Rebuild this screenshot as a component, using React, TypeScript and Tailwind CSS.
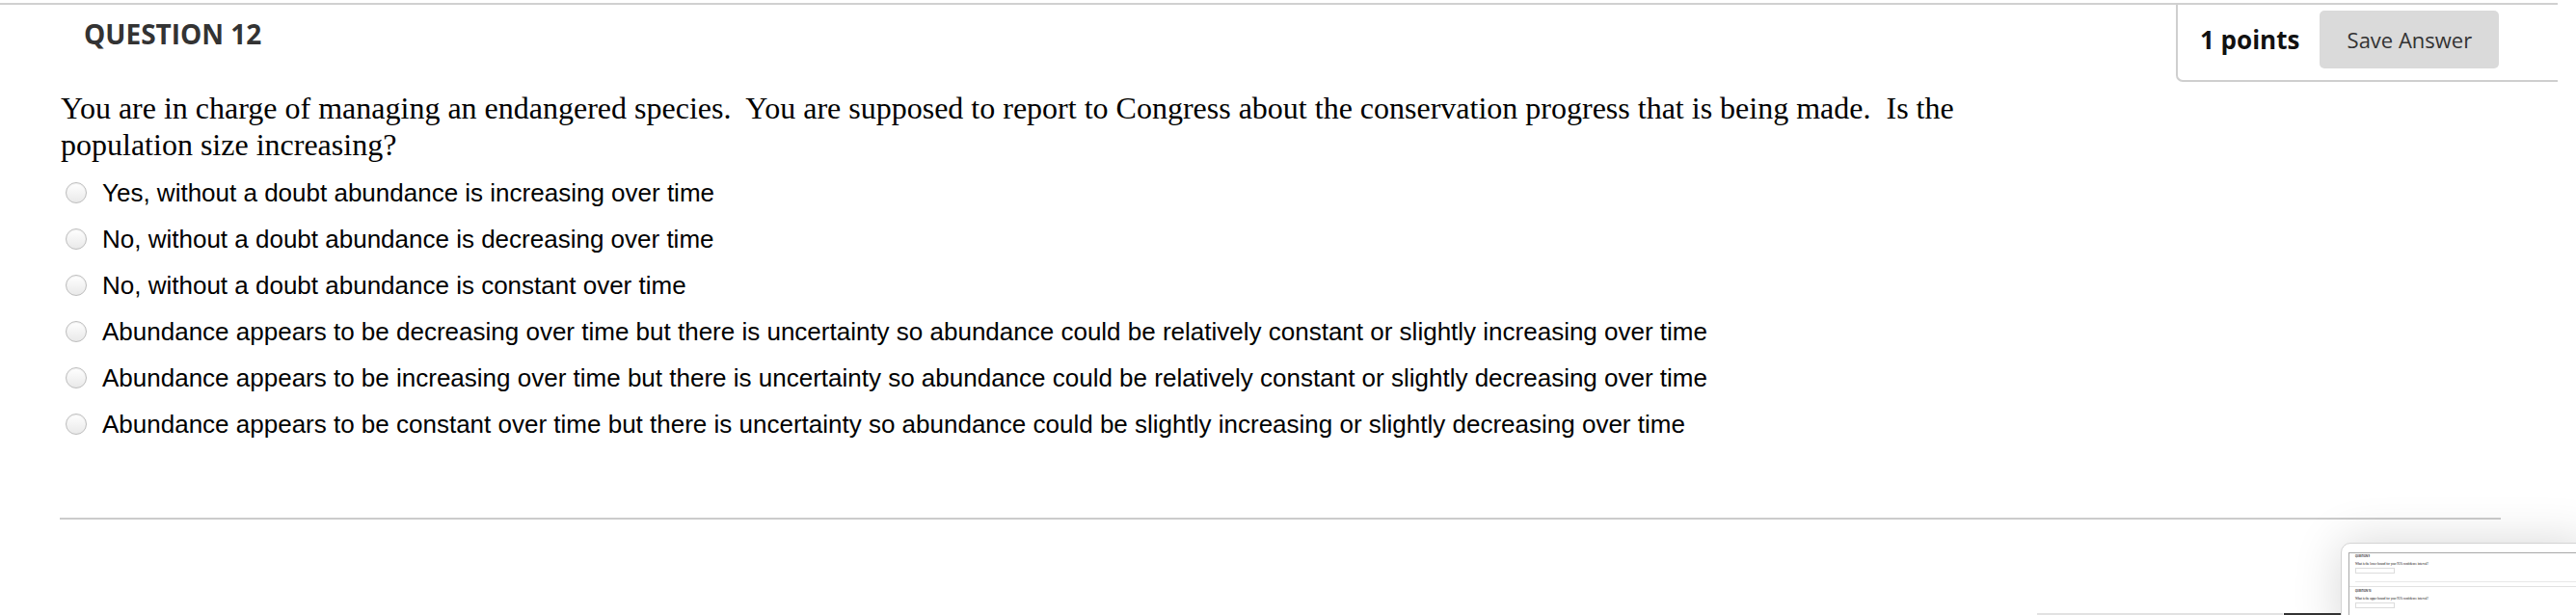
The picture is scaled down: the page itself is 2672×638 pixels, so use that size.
const options = [
  "Yes, without a doubt abundance is increasing over time",
  "No, without a doubt abundance is decreasing over time",
  "No, without a doubt abundance is constant over time",
  "Abundance appears to be decreasing over time but there is uncertainty so abundance could be relatively constant or slightly increasing over time",
  "Abundance appears to be increasing over time but there is uncertainty so abundance could be relatively constant or slightly decreasing over time",
  "Abundance appears to be constant over time but there is uncertainty so abundance could be slightly increasing or slightly decreasing over time",
];

function Radio() {
  return (
    <span className="h-[22px] w-[22px] shrink-0 rounded-full border border-[#bdbdbd] bg-linear-to-b from-white to-[#e9e9e9] shadow-[inset_0_1px_1px_rgba(0,0,0,0.06)]" />
  );
}

function ThumbQuestion({ label, text, first }: { label: string; text: string; first?: boolean }) {
  return (
    <div className={first ? "pt-[1px]" : "-ml-[6px] mt-[4px] border-t border-[#e2e2e2] pl-[6px] pt-[2px]"}>
      <p className="font-['Open_Sans',sans-serif] text-[2.5px] font-bold leading-[4px] text-[#333]">{label}</p>
      <p className="mt-[4px] font-['Liberation_Serif',serif] text-[3.2px] leading-[4px] text-black">{text}</p>
      <div className="mt-[2px] h-[6px] w-[41px] border border-[#dcdcdc]" />
      <div className="mt-[8px] h-px bg-[#e8e8e8]" />
    </div>
  );
}

function Thumbnail() {
  return (
    <div className="absolute left-[2428px] top-[563px] h-[100px] w-[260px] rounded-tl-[10px] border border-[#d4d4d4] bg-white pl-[7px] pt-[9px] shadow-[0_0_50px_rgba(0,0,0,0.16)]">
      <div className="h-full border-l border-t border-[#a8a8a8] bg-white pl-[6px]">
        <ThumbQuestion first label="QUESTION 9" text="What is the lower bound for your 95% confidence interval?" />
        <ThumbQuestion label="QUESTION 10" text="What is the upper bound for your 95% confidence interval?" />
      </div>
    </div>
  );
}

export default function App() {
  return (
    <div className="relative h-[638px] w-[2672px] overflow-hidden bg-white pt-[3px]">
      <div className="w-[2653px] border-t-2 border-[#d0d0d0]">
        <div className="flex items-start justify-between">
          <h2 className="pl-[87px] pt-[16px] font-['Open_Sans',sans-serif] text-[28px] font-bold leading-[28px] text-[#333]">
            QUESTION 12
          </h2>
          <div className="h-[80px] w-[396px] rounded-bl-[7px] border-b-2 border-l-2 border-[#cfcfcf] pl-[23px] pt-[6px]">
            <div className="flex h-[60px] items-center gap-[21px] font-['Open_Sans',sans-serif]">
              <span className="text-[26px] font-bold text-[#111]">1 points</span>
              <button className="h-[60px] w-[186px] rounded-[5px] bg-[#dadada] text-[22px] text-[#333]">
                Save Answer
              </button>
            </div>
          </div>
        </div>
      </div>

      <p className="mt-[8px] w-[2040px] whitespace-pre-wrap pl-[63px] font-['Liberation_Serif','Times_New_Roman',serif] text-[32px] leading-[38px] text-black">
        {"You are in charge of managing an endangered species.  You are supposed to report to Congress about the conservation progress that is being made.  Is the population size increasing?"}
      </p>

      <ul className="mt-[7px]">
        {options.map((o) => (
          <li key={o} className="flex h-[48px] items-center gap-[16px] pl-[68px]">
            <Radio />
            <span className="font-['Liberation_Sans',Arial,sans-serif] text-[26px] text-black">{o}</span>
          </li>
        ))}
      </ul>

      <div className="ml-[62px] mt-[73px] h-[2px] w-[2532px] bg-[#cbcbcb]" />

      <Thumbnail />
      <div className="absolute bottom-0 left-[2113px] h-[2px] w-[255px] bg-[#e2e2e2]" />
      <div className="absolute bottom-0 left-[2369px] h-[2px] w-[59px] bg-[#333]" />
    </div>
  );
}
